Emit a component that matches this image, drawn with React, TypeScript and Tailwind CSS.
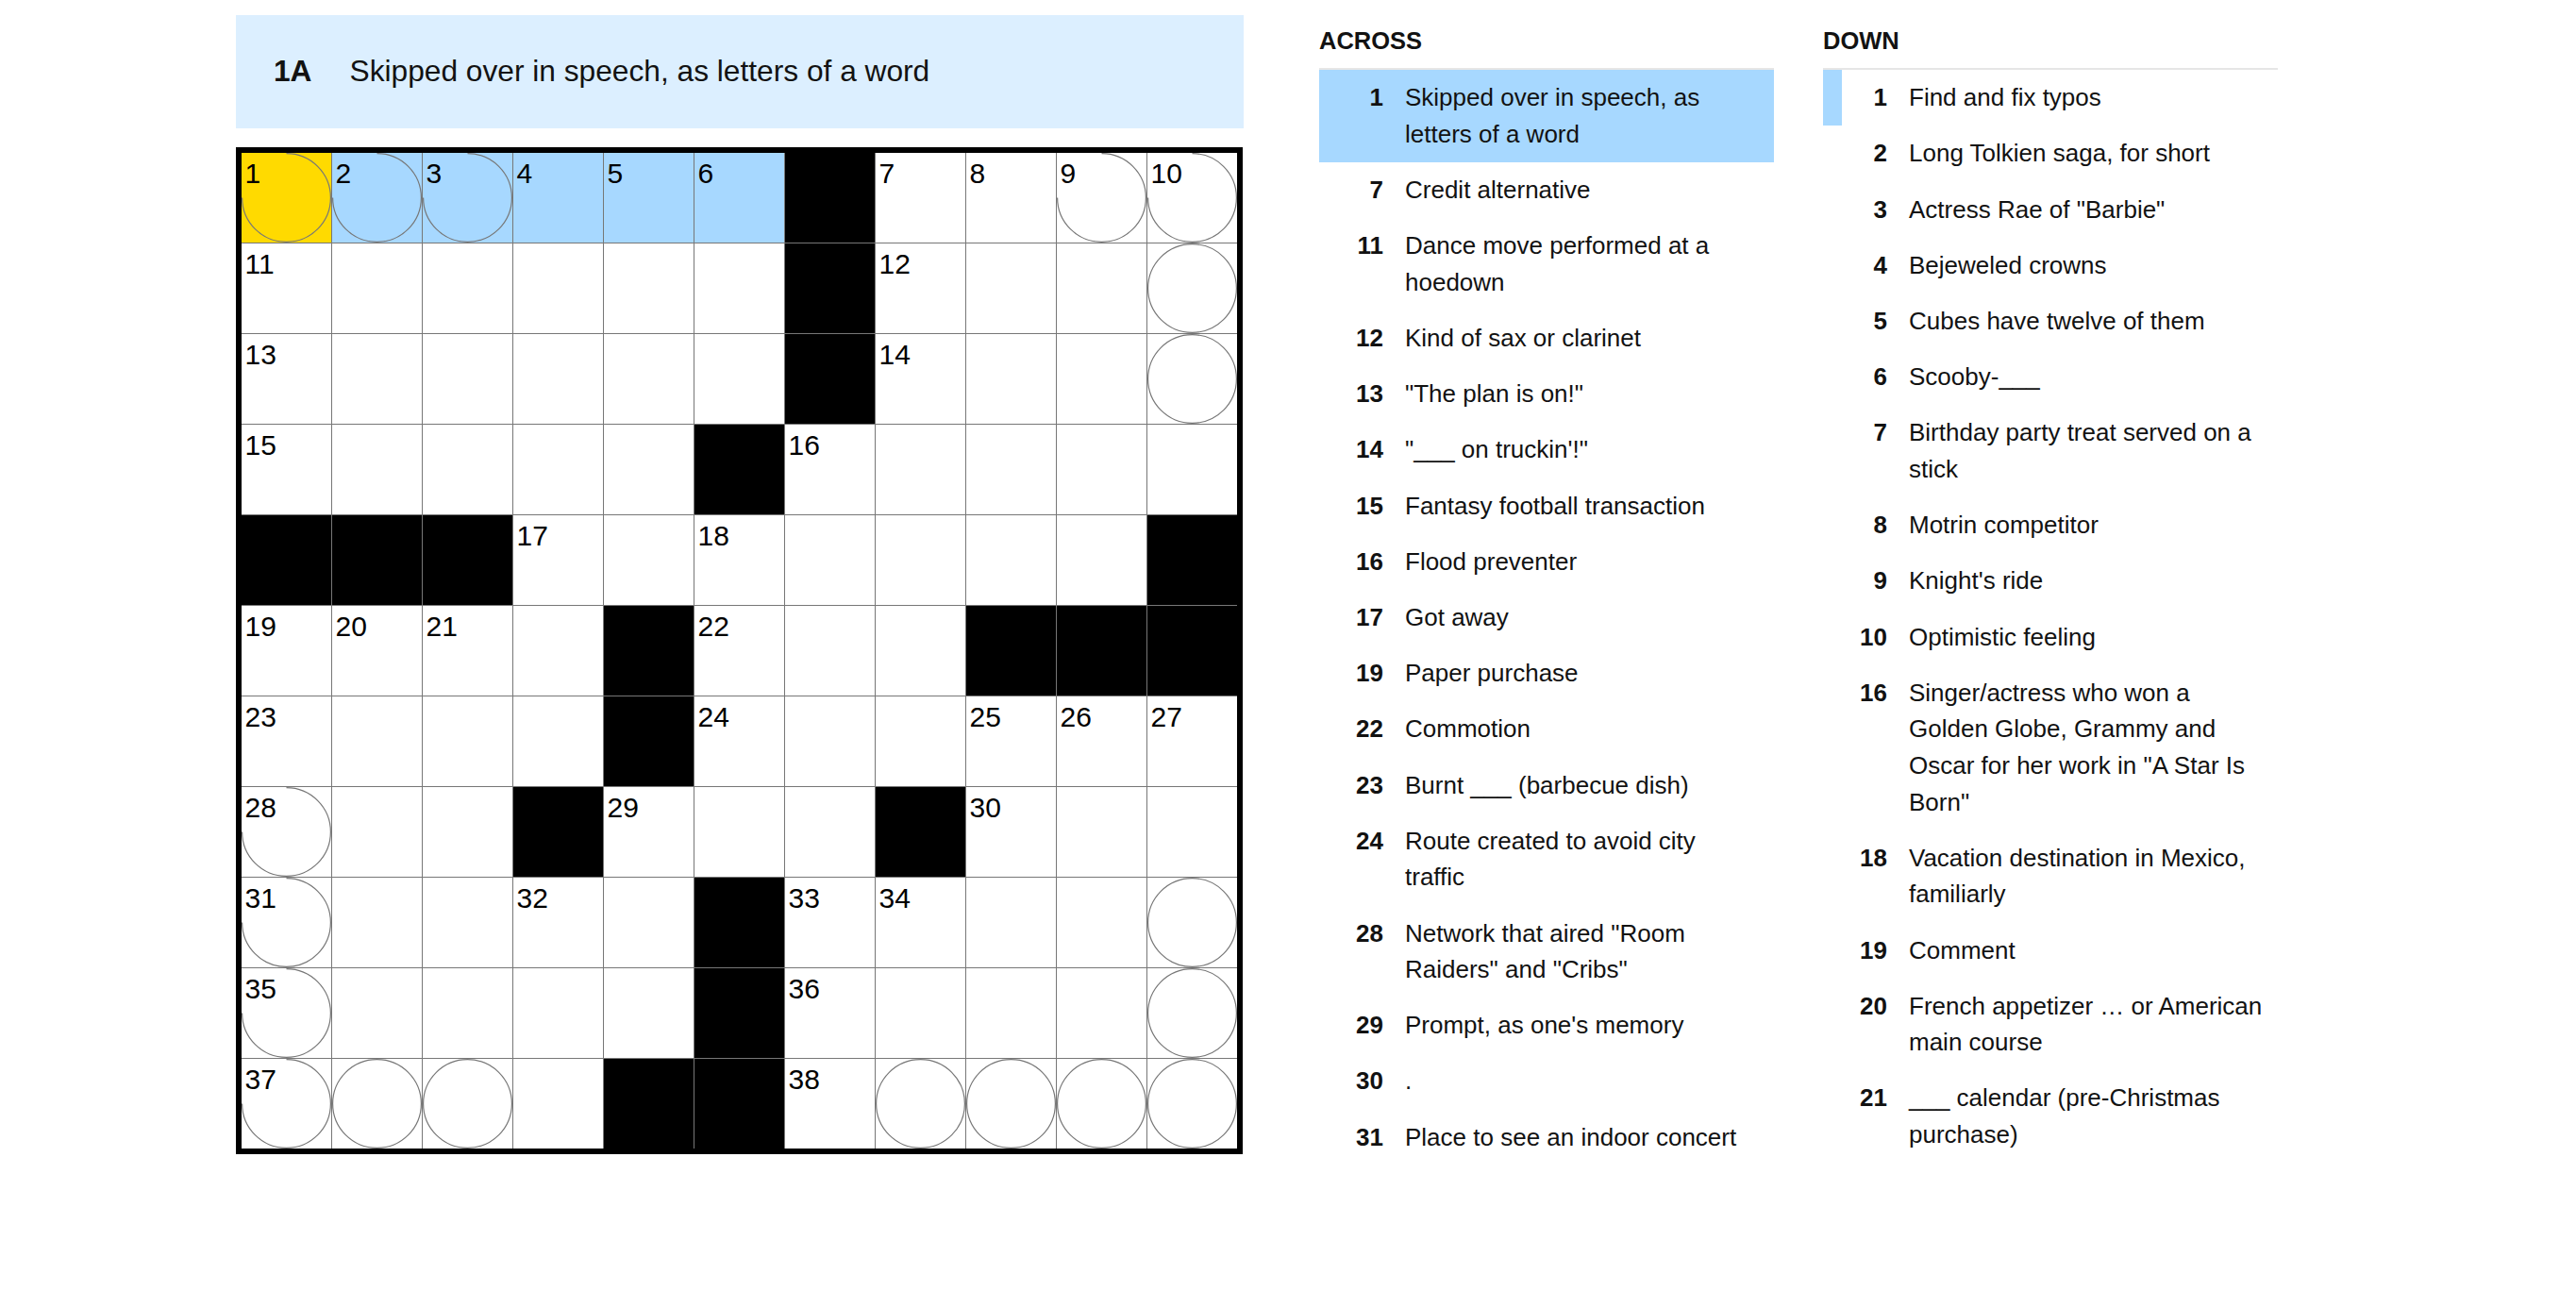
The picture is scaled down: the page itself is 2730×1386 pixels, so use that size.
import React from "react";

// Puzzle layout: "#" marks a black square.
const LAYOUT = [
  "......#....",
  "......#....",
  "......#....",
  ".....#.....",
  "###.......#",
  "....#...###",
  "....#......",
  "...#...#...",
  ".....#.....",
  ".....#.....",
  "....##.....",
];

const CIRCLED = new Set([
  "0,0", "0,1", "0,2", "0,9", "0,10",
  "1,10", "2,10",
  "7,0", "8,0", "8,10", "9,0", "9,10",
  "10,0", "10,1", "10,2", "10,7", "10,8", "10,9", "10,10",
]);

const SELECTED = "0,0";
const WORD = new Set(["0,1", "0,2", "0,3", "0,4", "0,5"]);

type Clue = { n: number; text: string };

const ACROSS: Clue[] = [
  { n: 1, text: "Skipped over in speech, as letters of a word" },
  { n: 7, text: "Credit alternative" },
  { n: 11, text: "Dance move performed at a hoedown" },
  { n: 12, text: "Kind of sax or clarinet" },
  { n: 13, text: "\"The plan is on!\"" },
  { n: 14, text: "\"___ on truckin'!\"" },
  { n: 15, text: "Fantasy football transaction" },
  { n: 16, text: "Flood preventer" },
  { n: 17, text: "Got away" },
  { n: 19, text: "Paper purchase" },
  { n: 22, text: "Commotion" },
  { n: 23, text: "Burnt ___ (barbecue dish)" },
  { n: 24, text: "Route created to avoid city traffic" },
  { n: 28, text: "Network that aired \"Room Raiders\" and \"Cribs\"" },
  { n: 29, text: "Prompt, as one's memory" },
  { n: 30, text: "." },
  { n: 31, text: "Place to see an indoor concert" },
];

const DOWN: Clue[] = [
  { n: 1, text: "Find and fix typos" },
  { n: 2, text: "Long Tolkien saga, for short" },
  { n: 3, text: "Actress Rae of \"Barbie\"" },
  { n: 4, text: "Bejeweled crowns" },
  { n: 5, text: "Cubes have twelve of them" },
  { n: 6, text: "Scooby-___" },
  { n: 7, text: "Birthday party treat served on a stick" },
  { n: 8, text: "Motrin competitor" },
  { n: 9, text: "Knight's ride" },
  { n: 10, text: "Optimistic feeling" },
  { n: 16, text: "Singer/actress who won a Golden Globe, Grammy and Oscar for her work in \"A Star Is Born\"" },
  { n: 18, text: "Vacation destination in Mexico, familiarly" },
  { n: 19, text: "Comment" },
  { n: 20, text: "French appetizer … or American main course" },
  { n: 21, text: "___ calendar (pre-Christmas purchase)" },
];

const isBlack = (r: number, c: number) =>
  r < 0 || c < 0 || r > 10 || c > 10 || LAYOUT[r][c] === "#";

// Standard crossword numbering: a square is numbered when it starts an across or down entry.
function numberGrid() {
  const nums: (number | null)[][] = [];
  let n = 1;
  for (let r = 0; r < 11; r++) {
    const row: (number | null)[] = [];
    for (let c = 0; c < 11; c++) {
      if (isBlack(r, c)) {
        row.push(null);
        continue;
      }
      const across = isBlack(r, c - 1) && !isBlack(r, c + 1);
      const down = isBlack(r - 1, c) && !isBlack(r + 1, c);
      row.push(across || down ? n++ : null);
    }
    nums.push(row);
  }
  return nums;
}

function Ring({ partial }: { partial: boolean }) {
  return (
    <svg
      className="absolute inset-0 pointer-events-none"
      width="95"
      height="95"
      viewBox="0 0 95 95"
    >
      {partial ? (
        <path d="M47.5 0.6 A46.9 46.9 0 1 1 0.6 47.5" fill="none" stroke="#777" strokeWidth="1.2" />
      ) : (
        <circle cx="47.5" cy="47.5" r="46.9" fill="none" stroke="#777" strokeWidth="1.2" />
      )}
    </svg>
  );
}

function Board() {
  const nums = numberGrid();
  const cells: React.ReactNode[] = [];
  for (let r = 0; r < 11; r++) {
    for (let c = 0; c < 11; c++) {
      const key = `${r},${c}`;
      const black = isBlack(r, c);
      const num = nums[r][c];
      let bg = "bg-white";
      if (black) bg = "bg-black";
      else if (key === SELECTED) bg = "bg-[#ffda00]";
      else if (WORD.has(key)) bg = "bg-[#a7d8ff]";
      cells.push(
        <div key={key} className={`relative h-[95px] w-[95px] ${bg}`}>
          {!black && CIRCLED.has(key) && <Ring partial={num !== null} />}
          {num !== null && (
            <span className="absolute left-[3.5px] top-[7px] text-[30px] leading-none text-black font-['Liberation_Sans',Arial,sans-serif]">
              {num}
            </span>
          )}
        </div>
      );
    }
  }
  return (
    <div className="grid w-[1067px] grid-cols-[repeat(11,95px)] gap-px border-[6px] border-black bg-[#777]">
      {cells}
    </div>
  );
}

function ClueList({
  title,
  clues,
  active,
  related,
}: {
  title: string;
  clues: Clue[];
  active?: number;
  related?: number;
}) {
  return (
    <section className="w-[482px]">
      <h3 className="h-[74px] border-b-2 border-[#e6e6e6] pt-[30.5px] text-[25.5px] font-bold leading-[25.5px] text-[#121212]">
        {title}
      </h3>
      <ol className="h-[1164px] overflow-hidden">
        {clues.map((cl) => {
          const isActive = cl.n === active;
          const isRelated = cl.n === related;
          return (
            <li
              key={cl.n}
              className={`flex border-l-[20px] py-[10.3px] pr-[10px] ${
                isActive
                  ? "border-transparent bg-[#a7d8ff]"
                  : isRelated
                  ? "border-[#a7d8ff]"
                  : "border-transparent"
              }`}
            >
              <span className="mr-[23px] w-[48px] shrink-0 text-right text-[26px] font-bold leading-[38.6px] text-[#121212]">
                {cl.n}
              </span>
              <span className="w-[377px] text-[26px] leading-[38.6px] text-[#121212]">{cl.text}</span>
            </li>
          );
        })}
      </ol>
    </section>
  );
}

export default function App() {
  return (
    <div className="flex h-[1386px] w-[2730px] bg-white font-['Liberation_Sans',Arial,sans-serif] text-[#121212]">
      <div className="ml-[250px] w-[1068px] pt-[16px]">
        <div className="flex h-[120px] w-[1068px] items-center bg-[#dcefff] pl-[40px]">
          <span className="mr-[40px] text-[31.7px] font-bold">1A</span>
          <span className="text-[31.7px]">Skipped over in speech, as letters of a word</span>
        </div>
        <div className="mt-[20px]">
          <Board />
        </div>
      </div>
      <div className="ml-[80px]">
        <ClueList title="ACROSS" clues={ACROSS} active={1} />
      </div>
      <div className="ml-[52px]">
        <ClueList title="DOWN" clues={DOWN} related={1} />
      </div>
    </div>
  );
}
